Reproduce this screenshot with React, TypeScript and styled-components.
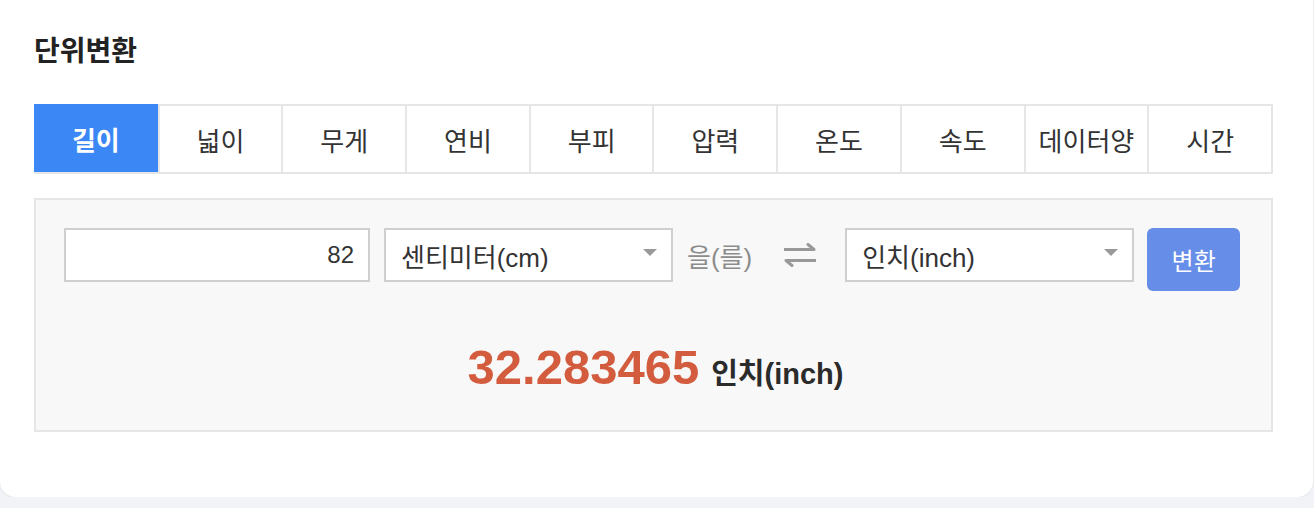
import styled, { createGlobalStyle } from "styled-components";

const GlobalStyle = createGlobalStyle`
  html, body {
    margin: 0;
    padding: 0;
    background-color: #f1f3f7;
  }
  body {
    font-family: "Liberation Sans", "Noto Sans CJK KR", sans-serif;
    color: #333;
  }
  * {
    box-sizing: border-box;
  }
`;

const Card = styled.section`
  width: 1313px;
  background-color: #fff;
  border-radius: 0 0 16px 16px;
  box-shadow: 0 1px 3px rgba(0, 0, 0, 0.06);
  padding: 31px 40px 65px 34px;
`;

const Title = styled.h2`
  margin: 0 0 32px;
  font-size: 28px;
  line-height: 41px;
  font-weight: 700;
  color: #222;
`;

const Tabs = styled.ul`
  list-style: none;
  margin: 0 0 24px;
  padding: 0;
  display: grid;
  grid-template-columns: repeat(10, 1fr);
  width: 1239px;
  border-top: 2px solid #e6e6e6;
  border-left: 2px solid #e6e6e6;
`;

const Tab = styled.li<{ $active?: boolean }>`
  display: flex;
  align-items: center;
  justify-content: center;
  border-right: 2px solid #e6e6e6;
  border-bottom: 2px solid #e6e6e6;
  font-size: 26px;
  font-weight: ${(p) => (p.$active ? 700 : 400)};
  color: ${(p) => (p.$active ? "#fff" : "#333")};
  background-color: ${(p) => (p.$active ? "#3b87f5" : "#fff")};
  margin: ${(p) => (p.$active ? "-2px 0 0 -2px" : "0")};
  height: ${(p) => (p.$active ? "70px" : "68px")};
`;

const Panel = styled.div`
  width: 1239px;
  background-color: #f8f8f8;
  border: 2px solid #e6e6e6;
  padding: 28px 28px 0;
  height: 234px;
`;

const Row = styled.div`
  display: flex;
  align-items: flex-start;
`;

const NumberInput = styled.input`
  width: 306px;
  height: 54px;
  border: 2px solid #cfcfcf;
  background: #fff;
  font-family: inherit;
  font-size: 24px;
  color: #333;
  text-align: right;
  padding: 0 14px;
  outline: none;
`;

const Select = styled.div<{ $ml: number }>`
  width: 289px;
  height: 54px;
  margin-left: ${(p) => p.$ml}px;
  border: 2px solid #cfcfcf;
  background: #fff;
  display: flex;
  align-items: center;
  justify-content: space-between;
  padding: 0 14px 0 15px;
  font-size: 26px;
  color: #333;
  &::after {
    content: "";
    border-left: 7px solid transparent;
    border-right: 7px solid transparent;
    border-top: 7px solid #999;
    margin-top: -6px;
  }
`;

const Particle = styled.span`
  margin-left: 14px;
  height: 54px;
  display: flex;
  align-items: center;
  font-size: 26px;
  color: #8c8c8c;
`;

const Swap = styled.span`
  width: 34px;
  height: 54px;
  margin-left: 31px;
  display: flex;
  align-items: center;
  justify-content: center;
  color: #999;
`;

const Button = styled.button`
  margin-left: 13px;
  width: 93px;
  height: 63px;
  border: none;
  border-radius: 6px;
  background-color: #668de8;
  color: #fff;
  font-family: inherit;
  font-size: 24px;
  padding: 0;
`;

const Result = styled.div`
  margin-top: 48px;
  display: flex;
  justify-content: center;
  align-items: baseline;
  gap: 12px;
  padding-left: 4px;
`;

const Value = styled.span`
  font-size: 49px;
  font-weight: 700;
  color: #d35c3f;
`;

const Unit = styled.span`
  font-size: 29px;
  font-weight: 700;
  color: #2b2b2b;
`;

const SwapIcon = () => (
  <svg width="34" height="24" viewBox="0 0 34 24" fill="none" stroke="currentColor" strokeWidth="3">
    <path d="M1 6.5 H31" />
    <path d="M25 1.5 L31 6.5" strokeLinecap="round" />
    <path d="M33 17.5 H3" />
    <path d="M9 22.5 L3 17.5" strokeLinecap="round" />
  </svg>
);

const tabs = ["길이", "넓이", "무게", "연비", "부피", "압력", "온도", "속도", "데이터양", "시간"];

export default function App() {
  return (
    <>
      <GlobalStyle />
      <Card>
        <Title>단위변환</Title>
        <Tabs>
          {tabs.map((t, i) => (
            <Tab key={t} $active={i === 0}>
              {t}
            </Tab>
          ))}
        </Tabs>
        <Panel>
          <Row>
            <NumberInput defaultValue="82" />
            <Select $ml={14}>센티미터(cm)</Select>
            <Particle>을(를)</Particle>
            <Swap>
              <SwapIcon />
            </Swap>
            <Select $ml={28}>인치(inch)</Select>
            <Button>변환</Button>
          </Row>
          <Result>
            <Value>32.283465</Value>
            <Unit>인치(inch)</Unit>
          </Result>
        </Panel>
      </Card>
    </>
  );
}
